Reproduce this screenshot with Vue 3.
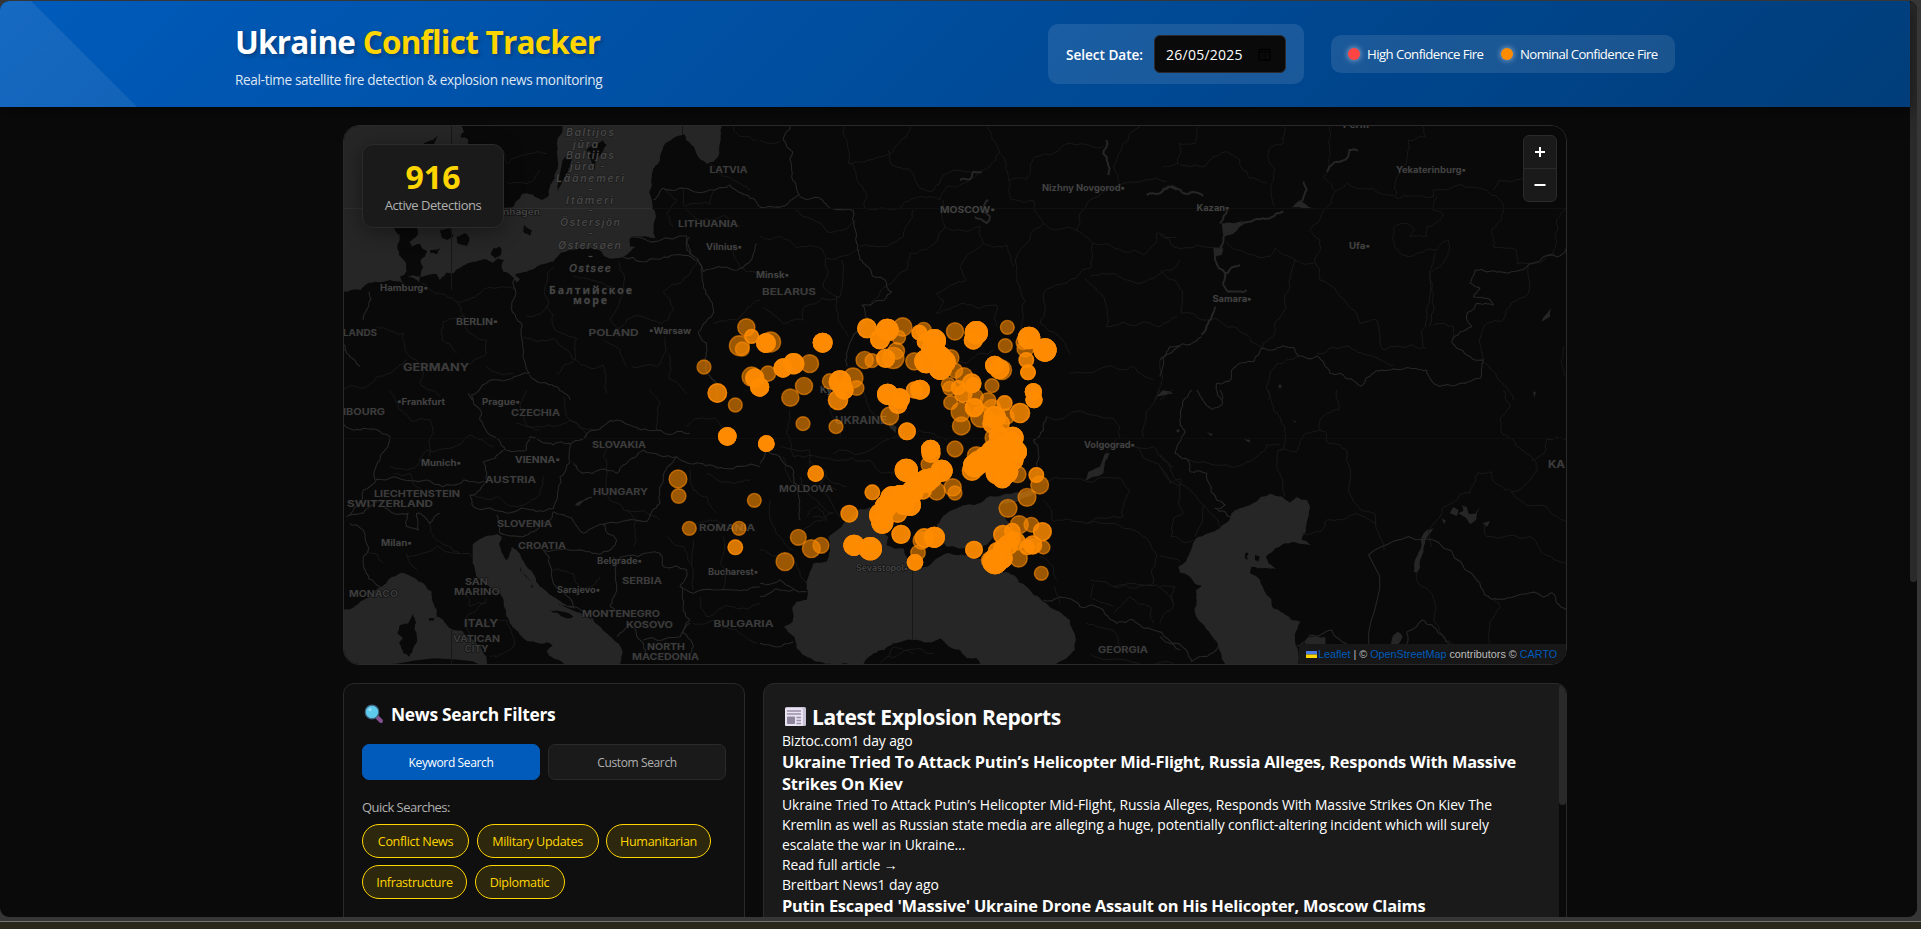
<script setup>
const chips = [
  { label: 'Conflict News', w: 107 },
  { label: 'Military Updates', w: 122 },
  { label: 'Humanitarian', w: 105 },
  { label: 'Infrastructure', w: 105 },
  { label: 'Diplomatic', w: 90 },
]

// Fire detections: x, y, radius, number of overlapping detections
const fires = [
  [199,82,27,1],[178,137,31,1],[187,147,22,1],[215,109,22,2],[272,126,31,1],[258,129,29,4],[72,201,22,1],[112,279,29,2],
  [166,315,22,1],[215,230,30,1],[224,234,28,3],[239,261,28,4],[264,221,24,1],[309,204,28,4],[341,191,31,4],[389,191,28,1],
  [372,258,27,1],[331,293,27,1],[428,128,29,5],[369,371,22,1],[468,380,22,1],[142,409,27,5],[259,431,24,5],[407,521,24,3],
  [450,244,24,1],[519,234,31,1],[530,264,23,1],[480,245,33,4],[492,270,28,4],[474,300,30,2],[223,601,22,1],[177,685,22,1],
  [166,742,23,2],[28,685,22,1],[-6,537,28,1],[-4,588,23,1],[355,712,25,1],[394,746,28,1],[423,736,25,1],[315,785,28,1],
  [561,85,29,3],[600,118,29,4],[622,90,33,5],[668,81,29,1],[656,112,22,1],[649,153,26,1],[640,174,33,1],[617,175,28,3],
  [554,180,27,1],[576,182,22,1],[718,98,23,3],[731,90,24,1],[735,125,24,3],[763,122,34,5],[825,94,27,1],[889,98,34,5],
  [880,120,28,3],[982,82,22,1],[976,137,22,1],[1047,114,33,5],[1095,150,34,5],[1036,146,26,1],[1039,180,23,2],[1044,217,23,3],
  [1030,127,23,1],[703,184,27,1],[739,184,35,5],[780,174,35,5],[813,173,25,1],[758,150,34,5],[781,205,34,5],[792,185,34,5],
  [770,165,34,5],[826,212,23,1],[852,229,27,1],[805,253,22,1],[809,265,22,1],[835,263,22,2],[875,250,29,2],[850,281,27,2],
  [812,308,22,1],[842,336,30,1],[887,291,24,1],[883,323,28,3],[924,302,25,1],[936,257,22,1],[944,196,28,4],[958,207,30,3],
  [966,210,30,1],[974,309,23,2],[1020,339,30,2],[904,350,33,1],[936,324,27,1],[844,378,28,1],[880,254,22,3],[944,352,33,3],
  [963,370,26,2],[936,371,28,3],[940,413,26,1],[1060,275,25,5],[1062,299,25,4],[957,408,30,4],[998,413,32,4],[980,350,24,1],
  [623,283,31,5],[659,296,30,5],[654,313,28,3],[703,270,25,2],[720,269,29,4],[629,348,28,1],[681,394,26,3],[752,448,28,5],
  [753,460,28,3],[825,447,25,1],[748,493,26,1],[679,511,34,5],[785,512,32,5],[755,535,30,5],[715,550,33,5],[697,575,33,5],
  [739,543,34,5],[770,574,27,1],[818,562,27,1],[825,579,22,1],[729,572,26,2],[636,594,34,5],[603,645,35,5],[607,668,32,5],
  [660,591,35,5],[690,615,32,4],[653,640,28,2],[618,620,33,5],[672,612,32,5],[577,577,23,2],[508,641,26,2],[522,736,31,5],
  [571,746,34,5],[663,703,28,3],[733,714,29,2],[725,722,27,1],[763,712,31,4],[714,758,23,1],[705,787,24,4],[882,749,26,3],
  [889,467,28,1],[914,470,30,4],[895,488,34,5],[876,512,30,2],[884,497,34,5],[938,455,34,5],[965,440,35,5],[995,425,30,5],
  [1008,455,32,5],[940,488,34,5],[970,478,35,5],[1000,480,30,4],[952,518,34,5],[980,515,34,5],[967,535,29,5],[1013,523,26,1],
  [1069,525,23,2],[1079,555,28,1],[1041,592,28,1],[984,625,28,1],[1018,674,28,1],[1054,674,23,1],[1087,695,28,2],[997,693,24,2],
  [969,704,29,2],[984,735,30,3],[1010,724,26,2],[1000,717,22,2],[1058,735,28,2],[1090,742,21,1],[1041,742,23,2],[1016,775,27,1],
  [951,754,27,2],[966,745,26,4],[968,776,29,5],[945,785,37,5],[930,781,27,1],[1084,820,22,1],[1056,738,23,1],
]
const discs = fires.flatMap(([x, y, r, n], i) =>
  Array.from({ length: n }, (_, k) => ({ key: i + '-' + k, x: 680 + x / 3, y: 300 + y / 3, r: (r - 1.2) / 3 })))

// Adds the small irregularities of a surveyed line to a coarse one
function rough(str, seed = 1, amp = 0.13) {
  let s = seed * 7919 + 13
  const rnd = () => { s = (s * 16807) % 2147483647; return s / 2147483647 - 0.5 }
  let pts = str.trim().split(/\s+/).map(p => p.split(',').map(Number))
  for (let k = 0; k < 3; k++) {
    const out = [pts[0]]
    for (let i = 1; i < pts.length; i++) {
      const [ax, ay] = pts[i - 1], [bx, by] = pts[i]
      const dx = bx - ax, dy = by - ay, d = Math.hypot(dx, dy)
      if (d > 9) {
        const o = rnd() * d * amp * 2.4
        out.push([(ax + bx) / 2 - dy / d * o, (ay + by) / 2 + dx / d * o])
      }
      out.push([bx, by])
    }
    pts = out
  }
  return 'M' + pts.map(p => p[0].toFixed(1) + ' ' + p[1].toFixed(1)).join('L')
}

// Six map sheets, each with its own origin and a scale of three units to a pixel
const sheets = [
  {
    x: 340, y: 120,
    water: [
      '0,0 1145,0 1142,60 1138,100 1120,125 1100,131 1078,115 1062,80 1040,62 1032,42 1000,55 970,80 960,110 955,130 940,145 935,175 938,260 948,290 946,355 905,350 870,352 870,380 893,380 865,400 850,412 820,416 795,410 785,395 760,385 720,385 690,390 660,400 640,425 600,435 560,455 525,465 540,480 530,488 505,460 490,455 485,435 492,420 475,415 460,428 440,418 400,425 365,440 340,460 318,458 300,480 290,462 240,470 238,490 222,474 195,465 180,470 190,490 150,480 90,488 62,510 0,515',
    ],
    land: [
      '350,0 372,35 362,52 385,60 380,85 420,110 450,160 470,230 490,262 520,260 532,240 548,222 600,238 622,232 635,190 655,130 652,60 670,10',
      '295,42 280,60 255,68 240,90 200,180 160,240 165,330 180,345 172,385 190,420 200,455 190,470 240,470 250,440 242,420 262,395 240,372 215,380 208,365 232,345 230,320 260,200 270,100',
      '668,120 690,100 695,120 680,160 665,190 655,215 652,200', '740,90 760,70 790,60 800,75 775,110 765,150',
      '300,330 330,325 340,350 322,360 305,352', '350,350 375,340 388,355 380,378 352,370', '270,390 300,385 292,402 272,400',
      '552,315 575,330 570,348 550,335', '460,385 480,380 485,400 465,415 452,402', '545,160 556,170 548,182 540,170',
    ],
    major: [
      '940,240 970,205 1030,205 1120,210 1170,195 1220,225 1262,262', '870,352 1040,348 1050,405', '850,412 960,418 1055,412 1085,440 1090,500 1110,540 1115,590 1075,635 1100,670 1095,720 1130,790 1128,840',
      '525,470 528,520 515,570 545,610 548,680 568,760 540,765 470,780 395,825 400,840', '568,765 620,790 650,800 690,840', '1048,350 1040,390 1090,455 1180,450 1225,430 1250,370', '88,515 85,560 70,600', '0,660 20,700 60,740',
    ],
    minor: [
      '490,90 500,130 550,105 620,100', '500,185 560,190 600,150', '970,205 1010,240 980,280 1000,320', '1030,205 1035,260 1110,255 1125,210', '1040,270 1080,300 1150,285 1200,320',
      '245,490 300,520 350,545 375,590 310,605 305,660 350,700', '350,545 420,520 490,500 525,510', '375,590 390,640 440,660 440,700 380,740', '550,650 640,655 720,730', '560,590 625,555 620,490 640,440',
      '620,555 640,620 710,655 705,720 650,760', '835,425 850,520 810,600 840,640', '970,515 1000,570 960,610 860,600 830,650', '970,515 1030,480 1070,425', '985,700 985,770 1040,820', '875,740 950,740 975,650', '860,740 840,690 790,660', '1120,610 1190,600 1260,540', '200,720 150,760 80,800 0,810', '110,620 190,640 200,700 250,740 240,790 300,830', '700,470 740,475 830,520', '1180,390 1200,440 1250,460', '1110,130 1180,180 1230,210', '1180,20 1200,50 1250,60', '440,740 520,760', '720,735 790,735 800,820',
    ],
  },
  {
    x: 760, y: 120, water: [], land: [],
    major: ['90,18 70,60 98,95 95,150 118,225 85,250 60,262 0,262', '118,230 180,235 210,265 280,272 290,370 310,430 340,470 375,480 395,515 340,548 305,555 325,600 260,700 260,740'],
    minor: [
      '255,20 265,130 280,135 290,180 320,220 315,265 400,270 460,235 540,240 560,200 610,190 655,155 690,140 720,92', '270,130 330,120 410,75 450,20', '385,90 395,135 450,150 480,205 515,215 550,165 600,150 640,160', '680,20 715,90 745,180 800,178 825,110 900,85 1030,80', '745,180 755,240 820,240 850,310 770,410 780,500 790,590 770,700',
      '850,310 950,330 1000,370 995,440 930,480 850,520 840,610 930,700', '550,240 555,320 490,390 450,400 440,450 330,560', '555,320 660,320 670,370 600,440 620,480 530,520 550,540 530,580', '670,370 740,375 760,440', '0,350 60,350 110,385 190,390 200,415 300,390', '195,415 190,500 240,530 245,420', '950,335 990,240 1090,190 1220,185', '1000,370 1090,395 1150,405 1190,340 1250,350', '990,470 1060,460 1130,490 1200,460 1260,420', '975,475 1040,560 1040,620 1140,610 1190,620 1250,590', '110,270 200,335 290,300', '300,380 380,380 430,350 460,270', '10,560 70,610 130,600 135,560 240,530', '530,580 610,550 710,555 710,620', '230,530 235,600 265,650', '1080,190 1060,140 1140,20', '930,760 1040,740 1120,740 1180,780', '1190,840 1200,720 1260,680', '530,700 620,730 700,690', '0,60 60,65',
    ],
    rivers: ['1040,60 1030,100 1042,125 1045,165', '600,180 630,178 640,155 665,155', '1160,225 1200,220 1230,200 1250,210', '645,290 680,310 690,290 670,260 685,240'],
  },
  {
    x: 1160, y: 120, water: ['185,310 220,310 250,300 240,320 210,345 190,350', '160,385 190,385 185,405 162,408', '1145,605 1175,565 1170,590', '395,262 420,240 440,255 462,268 420,262', '360,792 366,799 360,806 354,799'], land: [],
    major: ['0,770 10,710 50,680 125,650', '0,720 30,680 60,680', '170,790 215,775 220,745 280,725 305,685 340,690 400,682 415,708 470,708 510,760 540,760 605,798 640,760 690,750 735,745 800,750 840,800 900,790 960,775 970,720 920,705 875,665 935,620 920,585 950,550 1000,555 990,540 940,530 960,505 930,490 945,450 1020,455 1110,430 1190,410 1220,385', '170,790 185,840'],
    minor: [
      '115,20 105,70 60,70 55,130 10,140', '375,20 370,70 325,90 345,150 335,190 345,260', '60,135 130,140 160,110 200,95 240,120 270,175 320,190', '510,20 510,100 490,170 525,215 450,330 480,360 465,430 480,480 540,530 600,610 650,600 670,690 760,675 800,685', '525,215 560,190 640,205 680,225 820,230 820,210 980,210 1020,240 1025,300 995,330 1000,380 1070,390 1075,430', '790,20 795,50 745,60 740,130 705,190 710,225',
      '830,230 820,270 850,285 800,320 800,350 750,350 765,330 740,310 700,325 700,360 745,410 830,390 865,360 850,430 810,460 800,600 790,680', '200,365 260,400 330,410 345,385 405,420 390,500 375,570 350,600 345,640 305,685', '405,420 460,430', '0,450 45,480 65,580 130,600 165,595 250,640 305,680', '0,345 40,380 110,375 190,380', '820,615 880,620 880,660', '325,840 330,760 380,720 415,708', '470,700 570,680 640,710 700,735', '970,720 965,640 980,610 1030,600 1105,520 1105,440', '1070,430 1100,430 1180,400 1185,340 1215,265', '1210,680 1205,720 1215,770', '970,725 1010,770 1060,840', '1000,210 1020,180 1090,175', '825,400 820,430 810,460 820,520 808,620',
    ],
    rivers: ['0,220 25,200 50,205 70,220 130,228', '500,155 520,130 560,115 568,90 595,92', '190,350 230,318 270,305 330,295 370,275', '190,350 165,420 200,460 240,435', '195,460 190,495 205,515 260,510', '165,560 145,610 125,645', '180,310 200,270', '430,185 440,210 425,245'],
  },
  {
    x: 340, y: 390,
    water: [
      '0,662 30,658 60,635 100,610 120,592 150,565 185,548 215,560 250,580 275,605 280,640 290,660 290,680 310,690 335,718 365,722 400,750 440,800 450,840 0,840',
      '398,465 425,445 470,432 485,440 478,460 500,512 515,470 530,480 560,530 600,590 640,620 700,650 760,690 800,730 835,760 848,790 840,840 690,840 640,805 620,785 638,765 620,757 570,755 540,735 510,700 495,655 480,610 440,585 410,560 398,520',
      '705,345 755,320 758,324 715,348',
    ],
    land: ['220,670 225,710 230,730 222,770 208,800 190,790 178,760 188,745 172,730 180,705 205,700', '265,686 285,684 280,692 268,692', '630,660 670,665 700,680 690,685 640,668', '540,530 580,590 575,595 545,545', '650,640 720,660 715,668'],
    major: [
      '385,10 425,70 420,90 470,145 495,180 560,178 570,140 640,165 690,160 690,215 660,260 650,330 640,355 590,365 500,370 400,350 390,315 440,275 430,215 490,180', '690,165 760,120 830,90 880,110 950,120 1050,130', '700,220 730,250 830,250 860,220 910,180 1010,200', '1010,200 970,270 960,340 920,395 800,400 730,430 640,365', '1010,200 1080,220 1150,235 1260,230', '0,90 60,120 150,140 125,190 105,270', '70,300 160,260 260,270 310,290 370,270 435,275', '70,300 20,380 70,370 120,330 160,370 205,370 200,410 235,420 230,370 270,400 300,370', '30,400 70,420 70,530 120,590', '470,375 480,430 540,440 600,410 640,365', '610,480 640,580 700,650 760,690', '610,480 740,485 810,480 830,450 790,400', '820,500 830,600 810,650 850,680', '830,510 960,490 970,530 1040,540 1020,590 1060,610 1180,600 1260,590', '1025,590 1030,660 1050,690 1030,730 1060,770 1050,800', '830,740 870,700 910,760 920,800', '910,750 1020,740 1050,700',
    ],
    minor: [
      '150,0 180,60 210,90 270,90 280,130 270,200', '150,230 200,240 260,180 390,135 460,170', '560,0 540,50 560,110 600,120', '670,20 680,80 740,140', '530,100 600,110 690,90 760,120', '800,240 810,330 890,390 880,470', '800,150 800,250', '400,315 470,320 530,350 600,310 610,260', '270,400 290,450 360,490', '130,520 80,480', '200,500 390,490 395,500', '230,540 200,490', '380,610 390,650 440,640', '390,740 380,680 440,625', '440,700 500,690 520,770 450,800', '640,540 700,550 730,600 780,560', '950,120 960,40 930,0', '1040,110 1060,90 1120,85 1150,130', '1050,400 1130,390 1220,420', '1060,450 1060,600', '1150,440 1150,600', '1050,240 1060,300 1100,320 1130,370', '1100,250 1180,280 1230,270', '1080,620 1100,680 1180,650 1260,640', '1060,700 1120,690 1190,720 1250,760', '980,440 1030,470 1050,520', '250,310 210,250 160,250', '860,360 960,390',
    ],
  },
  {
    x: 760, y: 390,
    water: [
      '245,410 270,380 290,360 330,352 360,420 385,440 380,465 400,475 430,475 440,500 455,540 500,530 540,500 570,490 620,495 680,510 700,545 760,555 800,590 850,635 900,665 930,690 948,750 945,780 920,805 880,822 860,840 670,840 650,805 620,805 600,780 575,775 540,745 520,755 460,750 400,760 340,790 310,822 300,840 250,820 190,818 140,800 110,775 103,740 72,712 98,695 98,650 110,635 140,630 145,560 160,520 200,515 210,470 205,440',
      '545,450 530,405 560,370 600,350 640,345 690,318 760,310 810,300 830,305 780,330 715,345 750,400 700,440 680,465 640,470 560,470', '1035,190 1050,190 1030,250 1000,260 975,270 985,245 1020,230', '385,95 410,110 408,130 390,115', '1190,20 1210,0 1240,10',
    ],
    land: [],
    major: ['20,180 60,200 100,240 115,300 120,390', '0,220 20,180', '860,80 850,120 820,150 835,180 830,260 850,270', '0,580 60,570 140,605', '0,760 100,755', '850,630 900,620 960,650 1030,660 1070,700 1120,690 1180,720 1260,780', '0,620 100,600'],
    minor: [
      '90,60 80,130 100,200 220,210 330,210 370,250 480,250', '220,190 240,180 410,140 480,120 560,150', '310,0 330,60 350,80', '220,0 210,60 240,140', '60,170 150,180 160,250 230,300', '150,210 200,250 180,290 210,330 240,380', '70,200 100,280 150,300', '120,260 170,330 220,370', '180,240 260,290', '160,380 220,370', '850,280 920,265 1080,265 1110,300 1090,380 980,400 880,395 850,330', '980,400 1030,400 1150,440 1190,500 1180,580 1060,590 990,570', '860,80 1060,85 1080,140 1040,190', '1040,170 1180,170 1240,230', '1150,140 1180,40 1200,0', '1120,165 1260,290', '1000,580 990,620 1060,650', '880,590 900,640', '1060,670 1110,620 1170,650 1180,700', '980,700 1060,720 1090,780 1160,770', '1060,590 1190,585 1240,640', '990,790 1100,810 1240,820', '360,820 400,770 460,790', '380,800 440,780 520,790', '30,330 60,440 100,480', '0,480 80,490 140,580', '140,380 170,350 200,390 130,420', '890,570 880,530 840,500',
    ],
  },
  {
    x: 1160, y: 390,
    water: [
      '205,840 175,770 150,730 115,690 103,660 108,600 125,587 103,580 90,560 60,548 55,530 80,510 95,475 115,440 145,430 180,415 215,370 270,345 300,322 330,311 365,320 390,338 410,322 440,330 450,350 440,400 425,450 455,467 375,460 345,475 318,500 325,520 350,537 310,535 275,530 270,550 300,570 310,595 335,630 340,655 370,670 395,690 422,695 405,740 415,840',
      '435,762 440,745 495,740 497,762', '692,762 700,735 712,725 728,740 715,762', '762,545 765,510 780,480 785,440 800,420 825,412 805,435 795,460 785,500 780,530 770,548',
      '870,370 878,352 895,360 890,378', '895,370 910,362 905,345 920,350 925,370 945,372 960,352 948,390 930,402 915,382', '845,385 858,392 852,402', '968,400 990,392 980,410', '48,122 54,117 60,122 54,128', '140,125 160,132 152,138', '248,145 270,150 268,158', '395,90 408,94 406,98', '1120,5 1128,5 1124,42',
    ],
    land: ['255,490 265,488 262,510 255,505', '285,495 300,500 295,515 285,510'],
    major: ['110,0 155,58 188,40 180,0', '95,0 65,55 60,105 75,125 45,190 80,207 90,245 140,250 195,345 165,355 215,385', '626,762 626,495 790,448 935,550 995,628 1070,617 1150,622 1175,608 1220,660', '410,768 450,735 515,720 560,762', '740,762 740,730 770,710 785,690 820,710 850,740 870,762', '0,740 50,760 95,815 140,800 175,768'],
    minor: ['325,0 340,60 375,110 370,175 355,180 360,250 375,320', '530,0 535,60 480,90 480,120 500,130 505,160 540,165 560,180 565,300 590,345 645,370 672,480', '480,120 430,135 410,185 360,180', '360,165 320,165 260,215 215,232 80,207', '425,430 480,425 500,390 590,370 650,400', '1030,0 1050,50 1020,90 1025,130 1060,150 1115,200 1132,240 1055,305 1035,300 995,247 955,245 930,310 900,312 812,410 815,470', '1115,210 1160,180 1160,148 1220,150', '1055,305 1080,330 1160,350 1220,395', '975,400 980,440 1110,440 1150,490 1220,520', '770,548 785,590 810,605 820,690 880,762', '1000,630 1022,650 990,710 990,762', '0,195 40,260 130,345 180,410', '0,230 30,280 65,270 60,300 70,370 40,385 35,440 100,450', '135,345 105,440', '0,500 60,515', '0,590 45,590 40,650 0,700', '0,30 40,0'],
  },
]

// Place names: text, left, baseline, width, size, kind
const labels = [
  ['LATVIA', 709.5, 172.5, 38, 9, 'c'], ['LITHUANIA', 678, 226.5, 60, 9, 'c'], ['Vilnius▪', 706, 250, 36, 8.8, 't'], ['Hamburg▪', 380, 290.5, 48, 8.8, 't'],
  ['BERLIN▪', 456, 324.5, 42, 8.8, 't'], ['LANDS', 343, 335.5, 34, 9, 'c'], ['POLAND', 588.5, 336, 50, 9, 'c'], ['▪Warsaw', 649, 334, 42, 8.8, 't'],
  ['GERMANY', 403, 371, 66, 10, 'c'], ['nhagen', 503, 214.5, 37, 8.5, 't'], ['MOSCOW▪', 940, 212.5, 55, 8.5, 't'], ['Nizhny Novgorod▪', 1042, 191, 83, 8.8, 't'],
  ['Minsk▪', 756, 277.5, 33, 8.8, 't'], ['BELARUS', 762, 294.5, 54, 9, 'c'], ['Kazan▪', 1196.5, 210.5, 33, 8.8, 't'], ['Yekaterinburg▪', 1396, 172.5, 70, 8.8, 't'],
  ['Perm', 1343, 127.5, 26, 8.8, 't'], ['Ufa▪', 1349, 248.5, 21, 8.8, 't'], ['Samara▪', 1212.5, 301.5, 39, 8.8, 't'], ['▪Frankfurt', 397, 404.5, 48, 8.8, 't'],
  ['IBOURG', 343, 414.5, 42, 9, 'c'], ['Prague▪', 482, 404.5, 38, 8.8, 't'], ['CZECHIA', 511, 416, 49, 9, 'c'], ['SLOVAKIA', 592, 447.5, 54, 9, 'c'],
  ['Munich▪', 421, 465.5, 40, 8.8, 't'], ['VIENNA▪', 515, 463, 45, 8.8, 't'], ['AUSTRIA', 485, 482.5, 51, 9, 'c'], ['HUNGARY', 593, 495, 55, 9, 'c'],
  ['LIECHTENSTEIN', 374, 496.5, 86, 9, 'c'], ['SWITZERLAND', 347, 507, 86, 9, 'c'], ['SLOVENIA', 497, 526.5, 55, 9, 'c'], ['CROATIA', 518, 548.5, 48, 9, 'c'],
  ['Milan▪', 381, 545.5, 31, 8.8, 't'], ['Belgrade▪', 597, 564, 45, 8.8, 't'], ['SERBIA', 622, 583.5, 40, 9, 'c'], ['SAN', 465, 584.5, 23, 9, 'c'],
  ['MARINO', 454, 594.5, 46, 9, 'c'], ['MONACO', 349, 596.5, 49, 9, 'c'], ['Sarajevo▪', 557, 592.5, 43, 8.8, 't'], ['MONTENEGRO', 582, 616.5, 78, 9, 'c'],
  ['KOSOVO', 626, 627.5, 47, 9, 'c'], ['ITALY', 464, 626.5, 34, 10, 'c'], ['VATICAN', 453, 641.5, 47, 9, 'c'], ['CITY', 464.5, 651.5, 24, 9, 'c'],
  ['NORTH', 647, 649.5, 38, 9, 'c'], ['MACEDONIA', 632, 659.5, 67, 9, 'c'], ['BULGARIA', 713.5, 627, 60, 9, 'c'], ['ROMANIA', 699, 531, 56, 9, 'c'],
  ['Bucharest▪', 708, 575, 50, 8.8, 't'], ['MOLDOVA', 779, 491.5, 54, 9, 'c'], ['UKRAINE', 835, 423.5, 52, 10, 'c'], ['Kyiv▪', 820, 392.5, 25, 8.8, 't'],
  ['Sevastopol▪', 856, 570.5, 52, 8.5, 't'], ['Volgograd▪', 1084, 448, 51, 8.8, 't'], ['GEORGIA', 1098, 652.5, 50, 9, 'c'], ['KA', 1548, 467.5, 17, 10, 'c'],
]
const sea = [
  ['Baltijos', 566, 136, 48], ['jūra', 573, 147.5, 25], ['Baltijas', 566, 159, 48], ['jūra -', 570, 170, 35], ['Läänemeri', 556, 181.5, 68], ['-', 588, 192.5, 4], ['Itämeri', 566, 204, 47],
  ['-', 588, 214, 4], ['Östersjön', 560, 226, 60], ['-', 588, 237, 4], ['Østersøen', 558, 249, 63], ['-', 588, 260, 4], ['Ostsee', 569, 271.5, 42],
]
</script>

<template>
  <div class="desktop">
    <div class="window">
      <div class="page">
        <header class="header">
          <svg class="sheen" width="140" height="106" viewBox="0 0 140 106">
            <defs><linearGradient id="sheen" x1="0" y1="0" x2="1" y2="1"><stop offset="0" stop-color="#fff" stop-opacity=".09" /><stop offset="1" stop-color="#fff" stop-opacity=".07" /></linearGradient></defs>
            <path d="M0 0H31L137 106H0z" fill="url(#sheen)" />
          </svg>
          <div class="brand">
            <h1>Ukraine <span>Conflict Tracker</span></h1>
            <p>Real-time satellite fire detection &amp; explosion news monitoring</p>
          </div>
          <div class="tools">
            <div class="date">
              <label>Select Date:</label>
              <div class="field">
                <span>26/05/2025</span>
                <svg width="13" height="13" viewBox="0 0 13 13" fill="none" stroke="#000" stroke-width="1.3"><rect x="1" y="1.5" width="11" height="10.5" rx="1" /><path d="M1 4.2H12M3.5 6.7h1.3M6 6.7h1.3M8.5 6.7h1.3M3.5 9.2h1.3M6 9.2h1.3" /></svg>
              </div>
            </div>
            <div class="legend">
              <span class="item high"><i class="dot red"></i>High Confidence Fire</span>
              <span class="item nominal"><i class="dot amber"></i>Nominal Confidence Fire</span>
            </div>
          </div>
        </header>

        <main class="main">
          <section class="map">
            <svg width="1222" height="538" viewBox="344 126 1222 538">
              <rect x="344" y="126" width="1222" height="538" fill="#090909" />
              <g v-for="(s, i) in sheets" :key="i" :transform="`translate(${s.x} ${s.y}) scale(.33333)`">
                <path v-for="(p, k) in s.water" :key="'w' + k" :d="rough(p, k + 3, 0.09) + 'Z'" fill="#262626" />
                <path v-for="(p, k) in s.land" :key="'l' + k" :d="rough(p, k + 5) + 'Z'" fill="#090909" />
                <path v-for="(p, k) in s.minor" :key="'m' + k" :d="rough(p, k + 7)" class="minor" />
                <path v-for="(p, k) in s.major" :key="'c' + k" :d="rough(p, k + 11)" class="major" />
                <path v-for="(p, k) in s.rivers || []" :key="'r' + k" :d="rough(p, k + 2)" class="river" />
              </g>
              <path d="M344 208.5H652" stroke="#303030" />
              <path d="M652 208.5H1566" stroke="#101010" />
              <path d="M344 438.5H1566" stroke="#0e0e0e" />
              <path d="M451.5 126V290M682.5 126V134M451.5 630V664M912.5 560V640" stroke="#171717" />
              <g class="labels">
                <text v-for="(l, i) in labels" :key="i" :x="l[1]" :y="l[2]" :font-size="l[4]" :textLength="l[3]" lengthAdjust="spacingAndGlyphs" :class="l[5] === 'c' ? 'country' : 'town'">{{ l[0] }}</text>
                <text v-for="(l, i) in sea" :key="'s' + i" :x="l[1]" :y="l[2]" :textLength="l[3]" font-size="10.5" class="sea">{{ l[0] }}</text>
                <text x="549" y="293.5" textLength="83" font-size="10.5" class="sea cyr">Балтийское</text>
                <text x="573" y="304" textLength="34" font-size="10.5" class="sea cyr">море</text>
              </g>
              <circle v-for="d in discs" :key="d.key" :cx="d.x" :cy="d.y" :r="d.r" class="fire" />
            </svg>
            <div class="stat"><strong>916</strong><span>Active Detections</span></div>
            <div class="zoom">
              <button><svg width="12" height="12" viewBox="0 0 12 12"><path d="M6 1V11M1 6H11" stroke="#fff" stroke-width="2" /></svg></button>
              <button><svg width="12" height="12" viewBox="0 0 12 12"><path d="M.5 6H11.5" stroke="#fff" stroke-width="2" /></svg></button>
            </div>
            <div class="credit">
              <svg width="11" height="7" viewBox="0 0 11 7"><path fill="#4c7be1" d="M0 0h11v3.5H0z" /><path fill="#ffd500" d="M0 3.5h11V7H0z" /></svg>
              <a>Leaflet</a> | © <a>OpenStreetMap</a> contributors © <a>CARTO</a>
            </div>
          </section>

          <div class="columns">
            <section class="filters">
              <h2>
                <svg width="20" height="20" viewBox="0 0 20 20"><path d="M12.5 12.5L17 17" stroke="#85508f" stroke-width="4" stroke-linecap="round" /><circle cx="8" cy="8" r="6.8" fill="#5ecbed" stroke="#42617c" stroke-width="1.2" /><circle cx="6" cy="5.5" r="1.5" fill="#9be4f8" /></svg>
                <span>News Search Filters</span>
              </h2>
              <div class="tabs"><button class="tab on">Keyword Search</button><button class="tab">Custom Search</button></div>
              <p class="quick">Quick Searches:</p>
              <div class="chips"><button v-for="c in chips" :key="c.label" :style="{ width: c.w + 'px' }">{{ c.label }}</button></div>
            </section>

            <section class="feed">
              <div class="articles">
                <h2>
                  <svg width="23" height="20" viewBox="0 0 23 20"><rect x="1" y="0" width="21" height="19" rx="1.5" fill="#c9c1d6" /><rect x="1" y="1" width="18" height="18" rx="1.5" fill="#e9e3f1" /><path d="M3 4H17M3 7H17M12.500 10.500H17M12.500 13.500H17M12.500 16.500H17" stroke="#9a90a8" stroke-width="1.3" /><rect x="3" y="9.500" width="8" height="7.500" rx="1" fill="#8f869d" /></svg>
                  <span>Latest Explosion Reports</span>
                </h2>
                <p class="src">Biztoc.com1 day ago</p>
                <h3>Ukraine Tried To Attack Putin’s Helicopter Mid-Flight, Russia Alleges, Responds With Massive<br />Strikes On Kiev</h3>
                <p class="body">Ukraine Tried To Attack Putin’s Helicopter Mid-Flight, Russia Alleges, Responds With Massive Strikes On Kiev The<br />Kremlin as well as Russian state media are alleging a huge, potentially conflict-altering incident which will surely<br />escalate the war in Ukraine…</p>
                <p class="src">Read full article →</p>
                <p class="src">Breitbart News1 day ago</p>
                <h3>Putin Escaped 'Massive' Ukraine Drone Assault on His Helicopter, Moscow Claims</h3>
              </div>
              <div class="track"><div class="thumb"></div></div>
            </section>
          </div>
        </main>
      </div>
      <div class="scroll"><div class="grip"></div></div>
    </div>
    <div class="edge"></div>
  </div>
</template>

<style>
html, body { margin: 0; overflow: hidden; background: #353535; }
</style>

<style scoped>
* { box-sizing: border-box; }
h1, h2, h3, p { margin: 0; }
button { padding: 0; font: inherit; color: inherit; }
.desktop { width: 1921px; height: 929px; background: #363636; padding-top: 1px; overflow: hidden; display: flex; flex-direction: column; font-family: "Open Sans", "Noto Sans", sans-serif; color: #fff; }
.window { width: 1917px; height: 916px; flex: none; display: flex; border-radius: 9px; overflow: hidden; background: #0a0a0a; }
.edge { margin-top: 4px; height: 8px; background: #29261a; border-top: 1px solid #747474; flex: none; }
.page { width: 1910px; flex: none; }
.scroll { width: 7px; background: #0a0a0a; }
.grip { height: 581px; border-radius: 4px; background: #2a2a2a; }

.header { position: relative; height: 106px; padding: 0 235px; display: flex; justify-content: space-between; align-items: center; background: linear-gradient(135deg, #005bbb, #003d7a); box-shadow: 0 4px 20px rgba(0, 0, 0, .5); }
.sheen { position: absolute; left: 0; top: 0; }
.brand { padding-top: 3px; }
h1 { font-size: 31.5px; line-height: 40px; font-weight: 700; letter-spacing: -.77px; text-shadow: 2px 2px 4px rgba(0, 0, 0, .3); white-space: nowrap; }
h1 span { color: #ffd500; }
.brand p { margin-top: 8px; font-size: 13.6px; line-height: 20px; letter-spacing: -.35px; color: rgba(255, 255, 255, .88); white-space: nowrap; }
.tools { display: flex; align-items: center; gap: 27px; }
.date { width: 256px; height: 60px; border-radius: 10px; background: rgba(255, 255, 255, .1); display: flex; align-items: center; justify-content: space-between; padding: 0 18px; }
.date label { font-size: 13.6px; font-weight: 600; letter-spacing: -.03px; white-space: nowrap; }
.field { width: 132px; height: 38px; border-radius: 6px; border: 1px solid #2a2a2a; background: #0a0a0a; display: flex; align-items: center; justify-content: space-between; padding: 0 14px 0 11px; font-size: 14px; letter-spacing: .25px; }
.legend { width: 344px; height: 38px; border-radius: 10px; background: rgba(255, 255, 255, .1); display: flex; align-items: center; padding-left: 17px; font-size: 13.2px; letter-spacing: -.55px; white-space: nowrap; }
.item { display: flex; align-items: center; gap: 7px; }
.item.high { width: 153px; }
.item.nominal { letter-spacing: -.6px; }
.dot { width: 12px; height: 12px; border-radius: 50%; box-shadow: 0 0 6px rgba(255, 255, 255, .6); }
.red { background: #f44; }
.amber { background: #ff8c00; }

.main { padding: 18px 343px 0; display: flex; flex-direction: column; gap: 18px; }
.map { position: relative; height: 540px; border: 1px solid #2a2a2a; border-radius: 16px; overflow: hidden; background: #090909; }
.map > svg { display: block; }
.minor, .major, .river { fill: none; stroke-linejoin: round; }
.minor { stroke: #1a1a1a; stroke-width: 2.8; }
.major { stroke: #272727; stroke-width: 3.2; }
.river { stroke: #262626; stroke-width: 6; }
.labels text { paint-order: stroke; stroke: #0d0d0d; stroke-width: 1px; fill: #424242; font-family: Inter, sans-serif; font-weight: 700; }
.labels .country { fill: #3c3c3c; }
.labels .sea { font-style: italic; stroke: #171717; fill: #464646; font-weight: 600; }
.labels .cyr { font-style: normal; font-family: "Open Sans", sans-serif; font-weight: 700; }
.fire { fill: #ff8c00; fill-opacity: .6; stroke: #ff8c00; stroke-opacity: .6; stroke-width: 1.4; }
.stat { position: absolute; left: 18px; top: 18px; width: 142px; height: 84px; border: 1px solid #2a2a2a; border-radius: 11px; background: #1a1a1a; box-shadow: 0 4px 20px rgba(0, 0, 0, .4); display: flex; flex-direction: column; align-items: center; padding-top: 12px; }
.stat strong { font-size: 32px; line-height: 39px; color: #ffd500; }
.stat span { font-size: 13px; line-height: 18px; letter-spacing: -.45px; color: #b0b0b0; }
.zoom { position: absolute; right: 9px; top: 9px; width: 34px; height: 67px; border: 1px solid #2a2a2a; border-radius: 6px; overflow: hidden; background: #1a1a1a; display: flex; flex-direction: column; }
.zoom button { flex: 1; border: 0; background: none; display: flex; align-items: center; justify-content: center; }
.zoom button + button { border-top: 1px solid #2a2a2a; }
.credit { position: absolute; right: 0; bottom: 0; width: 267px; height: 20px; padding-left: 7px; background: rgba(26, 26, 26, .9); font: 10.8px/20px "Liberation Sans", Arial, sans-serif; color: #bdbdbd; white-space: nowrap; }
.credit svg { margin-right: 1px; }
.credit a { color: #005bbb; }

.columns { display: flex; gap: 18px; height: 260px; }
.filters { width: 402px; height: 300px; border: 1px solid #2a2a2a; border-radius: 11px; background: #0f0f0f; padding: 17px 18px; }
.filters h2 { display: flex; align-items: center; gap: 7px; height: 26px; font-size: 17.400px; letter-spacing: -.3px; padding-left: 2px; white-space: nowrap; }
.tabs { display: flex; gap: 8px; margin-top: 17px; }
.tab { flex: 1; height: 36px; border-radius: 7px; border: 1px solid #2a2a2a; background: #1a1a1a; color: #b0b0b0; font-size: 12px; letter-spacing: -.37px; }
.tab.on { background: #005bbb; border-color: #005bbb; color: #fff; }
.quick { margin-top: 17px; font-size: 13px; line-height: 20px; letter-spacing: -.53px; color: #b0b0b0; }
.chips { margin-top: 7px; display: flex; flex-wrap: wrap; gap: 7px 7.500px; }
.chips button { height: 34px; border: 1px solid #ffd500; border-radius: 17px; background: rgba(255, 213, 0, .12); color: #ffd500; font-size: 12.600px; letter-spacing: -.35px; white-space: nowrap; }
.feed { width: 804px; height: 300px; border: 1px solid #2a2a2a; border-radius: 11px; background: #1a1a1a; overflow: hidden; display: flex; }
.articles { flex: 1; padding: 19px 0 0 18px; white-space: nowrap; }
.articles h2 { display: flex; align-items: center; gap: 5px; padding-left: 2px; height: 27px; margin-bottom: 1px; font-size: 21px; letter-spacing: -.4px; }
.articles h3 { font-size: 16.400px; line-height: 22px; letter-spacing: -.22px; }
.src, .body { font-size: 13.900px; line-height: 20px; letter-spacing: -.1px; }
.track { width: 7px; background: #0a0a0a; }
.thumb { height: 121px; border-radius: 4px; background: #2a2a2a; }
</style>
